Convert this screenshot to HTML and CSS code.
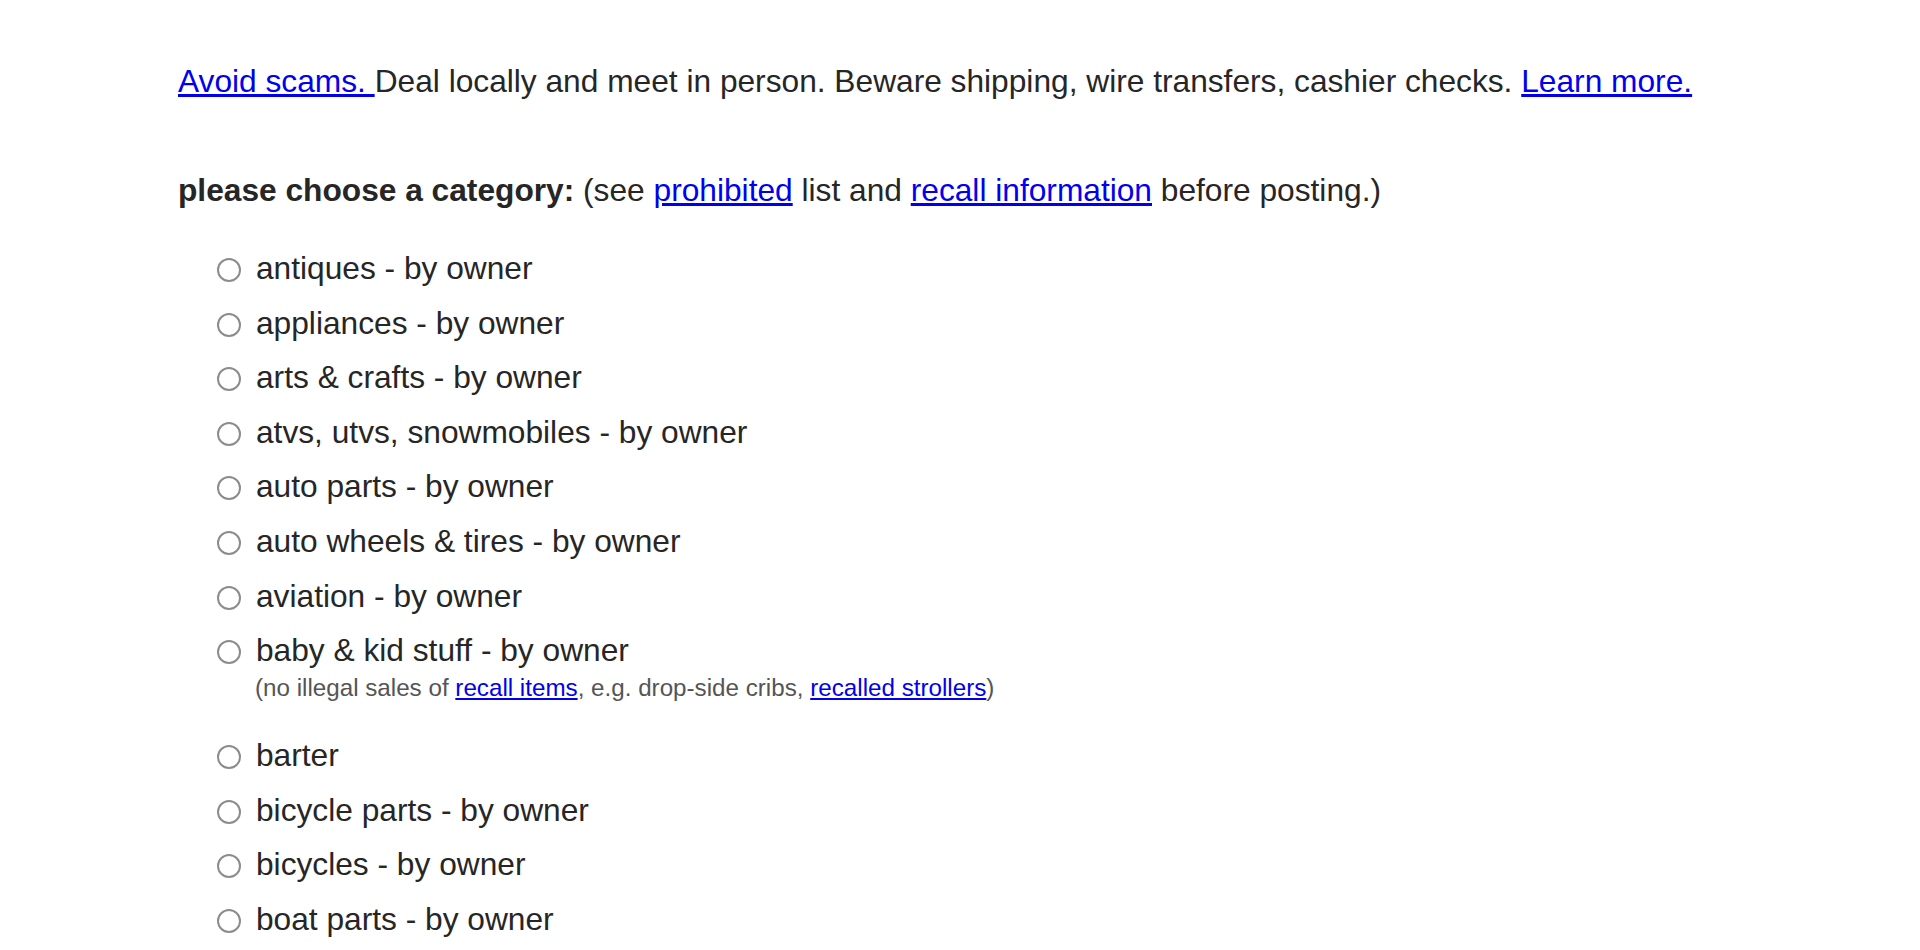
FILE: index.html
```html
<!DOCTYPE html>
<html lang="en">
<head>
  <meta charset="UTF-8" />
  <meta name="viewport" content="width=device-width, initial-scale=1" />
  <title>craigslist | post to classifieds</title>
  <link rel="stylesheet" href="styles.css">
</head>
<body>
  <div class="page">
    <p class="scam-notice">
      <a href="#">Avoid scams. </a>Deal locally and meet in person. Beware shipping, wire transfers, cashier checks. <a href="#">Learn more.</a>
    </p>

    <form class="picker">
      <p class="picker-title">
        <b>please choose a category:</b> (see <a href="#">prohibited</a> list and <a href="#">recall information</a> before posting.)
      </p>

      <ul class="cat-list">
        <li><label><input type="radio" name="id"> antiques - by owner</label></li>
        <li><label><input type="radio" name="id"> appliances - by owner</label></li>
        <li><label><input type="radio" name="id"> arts &amp; crafts - by owner</label></li>
        <li><label><input type="radio" name="id"> atvs, utvs, snowmobiles - by owner</label></li>
        <li><label><input type="radio" name="id"> auto parts - by owner</label></li>
        <li><label><input type="radio" name="id"> auto wheels &amp; tires - by owner</label></li>
        <li><label><input type="radio" name="id"> aviation - by owner</label></li>
        <li>
          <label><input type="radio" name="id"> baby &amp; kid stuff - by owner</label>
          <div class="note">(no illegal sales of <a href="#">recall items</a>, e.g. drop-side cribs, <a href="#">recalled strollers</a>)</div>
        </li>
        <li><label><input type="radio" name="id"> barter</label></li>
        <li><label><input type="radio" name="id"> bicycle parts - by owner</label></li>
        <li><label><input type="radio" name="id"> bicycles - by owner</label></li>
        <li><label><input type="radio" name="id"> boat parts - by owner</label></li>
      </ul>
    </form>
  </div>
</body>
</html>
```

FILE: styles.css
```css
body {
  margin: 0;
  font-family: "Liberation Sans", Arial, sans-serif;
  font-size: 31.7px;
  line-height: 37px;
  color: #262626;
  background: #fff;
}
a {
  color: #00e;
}
.page {
  padding: 63px 0 0 178px;
}
.scam-notice {
  margin: 0 0 72px;
}
.picker-title {
  margin: 0 0 41px;
}
.cat-list {
  list-style: none;
  margin: 0;
  padding: 0 0 0 39px;
}
.cat-list li {
  margin-bottom: 17.6px;
}
.cat-list li:last-child {
  margin-bottom: 0;
}
.cat-list label {
  display: flex;
  align-items: center;
  gap: 15px;
}
.cat-list input[type="radio"] {
  appearance: none;
  -webkit-appearance: none;
  margin: 3px 0 0;
  width: 24px;
  height: 24px;
  border: 2px solid #8c8c8c;
  border-radius: 50%;
  background: #fff;
  flex: none;
}
.note {
  font-size: 24.2px;
  line-height: 37px;
  color: #555;
  padding-left: 38px;
  margin-bottom: 31px;
}
```
